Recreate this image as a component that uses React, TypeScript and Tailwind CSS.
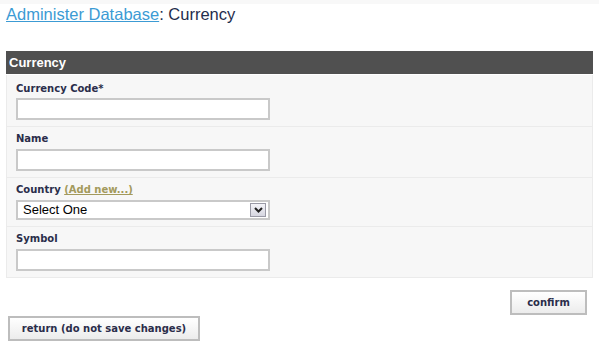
import React from 'react'

const label = "block text-[10px] leading-[14px] font-bold text-[#2a2d4a] [font-family:'DejaVu_Sans',Verdana,sans-serif]"
const field = 'block w-[254px] h-[22px] border-2 border-[#c9c9c9] bg-white'
const btn = "h-[25px] border-2 border-[#bdbdbd] bg-gradient-to-b from-white to-[#ececec] text-[10px] font-bold text-[#2a2d4a] [font-family:'DejaVu_Sans',Verdana,sans-serif]"

function Row({ children, last, top = 5 }: { children: React.ReactNode; last?: boolean; top?: number }) {
  return (
    <div className={`px-[9px] pb-[6px] ${top === 7 ? 'pt-[7px]' : 'pt-[5px]'} ${last ? '' : 'border-b border-[#ebebeb]'}`}>
      {children}
    </div>
  )
}

export default function App() {
  return (
    <div className="w-[599px] h-[348px] bg-white font-['Liberation_Sans',Arial,sans-serif]">
      <div className="h-[4px] bg-[#f8f8f8]" />
      {/* Breadcrumb title */}
      <h1 className="px-[6px] text-[16.5px] leading-[20px] text-[#1f2d4d]">
        <a href="#" className="text-[#3c9bd4] underline">Administer Database</a>: Currency
      </h1>

      {/* Form panel */}
      <div className="mx-[6px] mt-[27px]">
        <div className="h-[23px] bg-[#505050] px-[3px] text-[13px] leading-[23px] font-bold text-white">
          Currency
        </div>
        <div className="bg-[#f7f7f7] border border-t-0 border-[#ebebeb] mt-[1px]">
          <Row top={7}>
            <label className={label}>Currency Code*</label>
            <input className={`${field} mt-[2px]`} />
          </Row>
          <Row>
            <label className={label}>Name</label>
            <input className={`${field} mt-[3px]`} />
          </Row>
          <Row>
            <label className={label}>
              Country <a href="#" className="text-[#a39a5c] underline">(Add new...)</a>
            </label>
            <div className="mt-[3px] w-[254px] h-[20px] border-2 border-[#c9c9c9] bg-white flex items-center justify-between pl-[5px] pr-[2px]">
              <span className="text-[13px] text-black">Select One</span>
              <span className="w-[16px] h-[14px] border border-[#9a9aa6] bg-gradient-to-b from-[#f4f4f8] to-[#d6d6e0] flex items-center justify-center">
                <svg width="9" height="6" viewBox="0 0 9 6">
                  <path d="M1 1l3.5 3.5L8 1" fill="none" stroke="#222" strokeWidth="2" />
                </svg>
              </span>
            </div>
          </Row>
          <Row last>
            <label className={label}>Symbol</label>
            <input className={`${field} mt-[3px]`} />
          </Row>
        </div>
      </div>

      {/* Actions */}
      <div className="flex justify-end pr-[12px] mt-[12px]">
        <button className={`${btn} w-[77px]`}>confirm</button>
      </div>
      <div className="pl-[8px]">
        <button className={`${btn} w-[192px]`}>return (do not save changes)</button>
      </div>
    </div>
  )
}
